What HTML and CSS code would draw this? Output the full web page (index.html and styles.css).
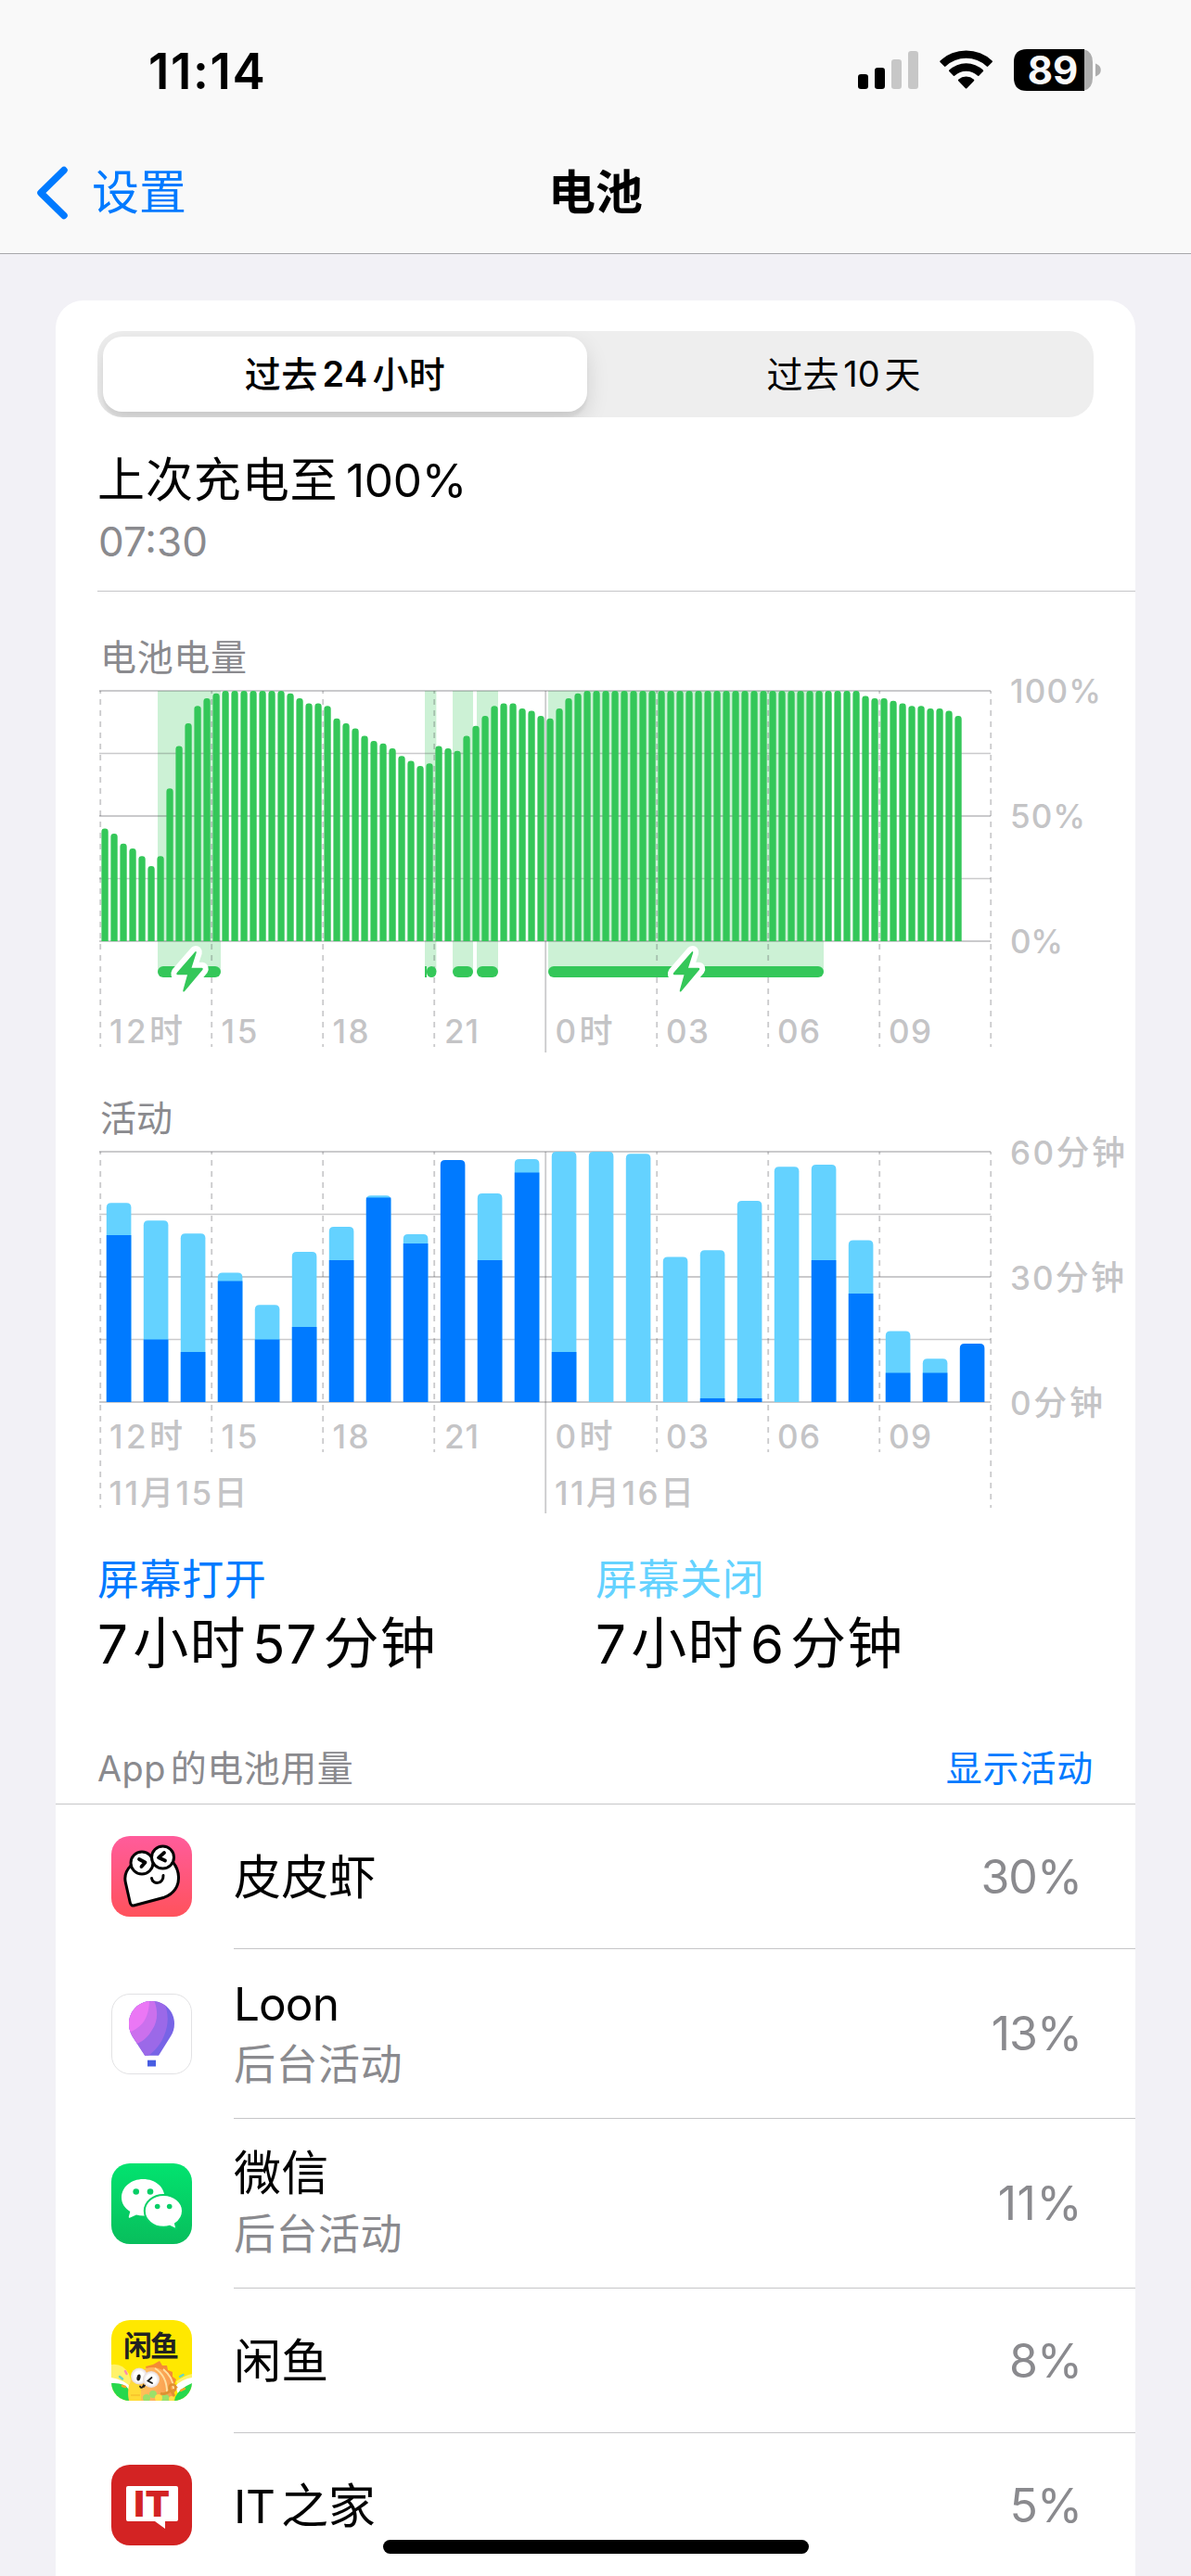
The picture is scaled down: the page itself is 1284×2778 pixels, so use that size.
FILE: index.html
```html
<!DOCTYPE html>
<html lang="zh-CN">
<head>
<meta charset="utf-8">
<title>电池</title>
<link rel="stylesheet" href="styles.css">
</head>
<body>
<header class="header">
  <div class="status">
    <span class="time">11:14</span>
    <svg class="status-icons" viewBox="920 50 270 52" width="270" height="52">
      <rect x="925" y="80" width="11" height="16" rx="3.2"/>
      <rect x="943" y="73" width="11" height="23" rx="3.2"/>
      <rect x="961" y="64" width="11" height="32" rx="3.2" fill="#c7c7c7"/>
      <rect x="979" y="55" width="11" height="41" rx="3.2" fill="#c7c7c7"/>
      <path d="M1013.6 65.5A41 41 0 0 1 1069.600 65.500Q1070.400 66.300 1069.700 67L1065.200 71.600Q1064.500 72.200 1063.700 71.500A32.500 32.500 0 0 0 1019.500 71.500Q1018.700 72.200 1018 71.600L1013.500 67Q1012.800 66.300 1013.600 65.500Z"/>
      <path d="M1023.300 75.600A26.500 26.500 0 0 1 1059.900 75.600Q1060.600 76.400 1059.900 77.100L1055.300 81.700Q1054.600 82.300 1053.800 81.600A18 18 0 0 0 1029.400 81.600Q1028.600 82.300 1027.900 81.700L1023.300 77.100Q1022.600 76.400 1023.300 75.600Z"/>
      <path d="M1033.200 85.700A13 13 0 0 1 1050 85.700Q1050.700 86.500 1050 87.200L1042.300 95.200Q1041.600 95.900 1040.900 95.200L1033.200 87.200Q1032.500 86.500 1033.200 85.700Z"/>
      <path d="M1107 53H1169V98H1107Q1093 98 1093 84V67Q1093 53 1107 53Z"/>
      <path fill="#adadad" d="M1169 53.300Q1178 56 1178 67V84Q1178 95 1169 97.700ZM1181 68.500Q1186.800 70.500 1186.800 75.500T1181 82.500Z"/>
      <text class="battery-level" x="1135" y="90.500" text-anchor="middle">89</text>
    </svg>
  </div>
  <nav class="nav">
    <a class="back">
      <svg viewBox="0 0 34 58" width="34" height="58"><path d="M30 4.500L5 29L30 53.500" fill="none" stroke="#007aff" stroke-width="7.500" stroke-linecap="round" stroke-linejoin="round"/></svg>
      <span>设置</span>
    </a>
    <h1>电池</h1>
  </nav>
</header>

<main class="card">
  <div class="segmented">
    <span class="segment active">过去<span class="n">24</span>小时</span>
    <span class="segment">过去<span class="n">10</span>天</span>
  </div>

  <section class="last-charge">
    <div class="charge-title">上次充电至<span class="n end">100%</span></div>
    <div class="charge-time">07:30</div>
  </section>

  <svg class="chart" id="level-chart" viewBox="60 638 1164 522" width="1164" height="522"></svg>
  <svg class="chart" id="activity-chart" viewBox="60 1160 1164 490" width="1164" height="490"></svg>

  <section class="summary">
    <div>
      <div class="summary-label on">屏幕打开</div>
      <div class="summary-value"><span class="n start">7</span>小时<span class="n">57</span>分钟</div>
    </div>
    <div>
      <div class="summary-label off">屏幕关闭</div>
      <div class="summary-value"><span class="n start">7</span>小时<span class="n">6</span>分钟</div>
    </div>
  </section>

  <div class="list-head">
    <span><span class="n start">App</span>的电池用量</span>
    <a>显示活动</a>
  </div>

  <ul class="apps">
    <li class="app">
      <svg class="icon" viewBox="0 0 87 87">
        <defs><linearGradient id="pink" x2="0" y2="1"><stop stop-color="#ff5c9b"/><stop offset="1" stop-color="#ff525c"/></linearGradient></defs>
        <rect width="87" height="87" rx="20" fill="url(#pink)"/>
        <g fill="#fff" stroke="#000" stroke-width="3" stroke-linecap="round" stroke-linejoin="round">
          <path d="M21 32C15.500 37.500 14 44 15.300 50L20.300 72Q21.200 75.800 25 74.800L57 66.200C67.500 62.500 73 54 72.500 44C72.300 38.500 70.500 33.500 67 29L44 22Z"/>
          <circle cx="33" cy="29" r="12"/><circle cx="55.500" cy="23" r="12"/>
          <path fill="none" d="M43.500 45.500C44.500 53 56.500 52 56 42.500"/>
          <path fill="none" stroke-width="3.800" d="M30 25L36.500 28.500L32.500 33M57 18L51 23.300L58 26.500"/>
        </g>
      </svg>
      <div class="app-body"><div class="app-text"><div class="app-name">皮皮虾</div></div><span class="pct">30%</span></div>
    </li>
    <li class="app tall">
      <svg class="icon" viewBox="0 0 87 87">
        <defs><clipPath id="balloon"><path d="M43.500 8C57.500 8 68 19 68 32.500C68 38 66.500 42 64 46L51 66.700H36.200L22.700 46C20.500 42 19 38 19 32.500C19 19 29.500 8 43.500 8Z"/></clipPath></defs>
        <rect x=".5" y=".5" width="86" height="86" rx="19.500" fill="#fff" stroke="#e2e2e4"/>
        <g clip-path="url(#balloon)">
          <path fill="#7764e6" d="M0 0H87V87H0Z"/>
          <path fill="#9b69e8" d="M0 0H52C62 15 63 31 57 45C53 55 46 64 36 69H0Z"/>
          <path fill="#cb70ed" d="M0 0H43C51 15 51 29 44 39C40 46 35 51 27 54.500H0Z"/>
          <path fill="#eb77f5" d="M0 0H41C42 23 36 35 19 42H0Z"/>
        </g>
        <path fill="#485de2" d="M39 71.700H48V78.500H39Z"/>
      </svg>
      <div class="app-body"><div class="app-text"><div class="app-name latin">Loon</div><div class="app-sub">后台活动</div></div><span class="pct">13%</span></div>
    </li>
    <li class="app tall">
      <svg class="icon" viewBox="0 0 87 87">
        <defs><linearGradient id="green" x2="0" y2="1"><stop stop-color="#02e36f"/><stop offset="1" stop-color="#08be5c"/></linearGradient></defs>
        <rect width="87" height="87" rx="20" fill="url(#green)"/>
        <path fill="#fff" d="M34.300 17C47.500 17 57.500 25.500 57.500 37S47.500 56.500 34.500 56.500Q30.500 56.500 27 55.500L19.800 58.700Q18.500 59 18.800 57.600L20.300 52C14.500 48.500 11 43 11 37C11 25.500 21.500 17 34.300 17Z"/>
        <path fill="#fff" stroke="#06d066" stroke-width="2" d="M56.300 34C45 34 35.800 41.500 35.800 51.300S45 68.800 56.300 68.800Q60 68.800 63 67.800L69 70.600Q70.400 71 70.100 69.600L69 65.200C74 61.800 77 57 77 51.300C77 41.500 67.600 34 56.300 34Z"/>
        <g fill="#06ce66"><circle cx="26.700" cy="30.500" r="3.300"/><circle cx="42" cy="30.500" r="3.300"/><circle cx="49.700" cy="46.500" r="2.800"/><circle cx="62.700" cy="46.500" r="2.800"/></g>
      </svg>
      <div class="app-body"><div class="app-text"><div class="app-name">微信</div><div class="app-sub">后台活动</div></div><span class="pct narrow">11%</span></div>
    </li>
    <li class="app">
      <svg class="icon" viewBox="0 0 87 87">
        <defs>
          <clipPath id="tile"><rect width="87" height="87" rx="20"/></clipPath>
          <linearGradient id="shell" x2="1" y2="0"><stop stop-color="#ffd24a"/><stop offset=".5" stop-color="#ffb45e"/><stop offset="1" stop-color="#f7974a"/></linearGradient>
          <radialGradient id="eye"><stop offset=".6" stop-color="#fff"/><stop offset="1" stop-color="#e3d8d8"/></radialGradient>
        </defs>
        <g clip-path="url(#tile)">
          <rect width="87" height="87" fill="#ffe800"/>
          <path fill="#fff26a" d="M0 48Q12 46 19 58L28 87H0ZM87 58Q78 60 70 66L76 87H87Z"/>
          <path fill="#fff" d="M0 62Q13 64 22 73V82L0 74ZM87 62Q76 64 69 71L72 80L87 72Z"/>
          <path fill="#27d84c" d="M0 68Q14 67 19 75L21 87H0ZM87 68Q73 74 69 83L68 87H87Z"/>
          <path fill="#f58b35" d="M37 50L45 48L52 44L55 49L60 49L61 54L66 56L66 61L70 64L68 69L72 73H44Z"/>
          <path fill="url(#shell)" d="M32 55C46 45 66 55 69 75L66 87H19C17 78 20 70 21 64Z"/>
          <path fill="none" stroke="#ffe0a0" stroke-width="2" d="M47 52Q60 60 60 78M56 53Q67 62 67 74"/>
          <path fill="#ffdb35" d="M19 70Q25 62 32 73V87H20Q17 79 19 70Z"/>
          <path fill="none" stroke="#f4b326" d="M21 81H31"/>
          <circle cx="30" cy="60.500" r="9" fill="url(#eye)"/><circle cx="43" cy="64" r="9" fill="url(#eye)"/>
          <ellipse cx="29.500" cy="62" rx="2" ry="3.500" fill="#1d1d1d" transform="rotate(12 29.500 62)"/>
          <path fill="none" stroke="#1d1d1d" stroke-width="1.800" stroke-linecap="round" d="M43.500 62L39.500 65.500L44 68M31 71.500Q32.500 74.500 34.500 71Q35 73 36 70.500"/>
          <g fill="#9be06a"><circle cx="45" cy="80" r="4"/><circle cx="38" cy="84" r="4"/><circle cx="58" cy="85" r="5"/></g>
          <g fill="#ffe14a"><circle cx="51" cy="84" r="4"/><circle cx="65" cy="85" r="3"/></g>
          <g fill="none" stroke="#df9131" stroke-width="2.600"><circle cx="66" cy="73" r="3.500"/><path d="M53 79Q58 81 64 76M65 77L68 82"/></g>
          <g stroke-width="2.500" stroke-linecap="round"><path stroke="#f78fae" d="M15 55L16.500 58"/><path stroke="#69d4c4" d="M9 61L12 63.500M74 61L77.500 59"/><path stroke="#f6a623" d="M12 71L15 72M75 76L79 74"/></g>
          <text class="xianyu-mark" x="13" y="39" textLength="60">闲鱼</text>
        </g>
      </svg>
      <div class="app-body"><div class="app-text"><div class="app-name">闲鱼</div></div><span class="pct">8%</span></div>
    </li>
    <li class="app">
      <svg class="icon" viewBox="0 0 87 87">
        <rect width="87" height="87" rx="20" fill="#d32323"/>
        <path fill="#fff" d="M18 23H70Q72 23 72 25V59Q72 61 70 61H58V69L47 61H18Q16 61 16 59V25Q16 23 18 23Z"/>
        <text class="it-mark" x="24.500" y="56" textLength="38.500" lengthAdjust="spacing">IT</text>
      </svg>
      <div class="app-body"><div class="app-text"><div class="app-name it"><span class="n start">IT</span>之家</div></div><span class="pct">5%</span></div>
    </li>
  </ul>
</main>
<div class="home-indicator"></div>
<script src="charts.js"></script>
</body>
</html>
```
FILE: styles.css
```css
* { box-sizing: border-box; }

html, body { height: 100%; }

body {
  margin: 0;
  overflow: hidden;
  display: flex;
  flex-direction: column;
  width: 1284px;
  height: 2778px;
  background: #f2f1f6;
  color: #000;
  font-family: Inter, "Noto Sans CJK SC", sans-serif;
  font-size: 51px;
  text-autospace: no-autospace;
  position: relative;
}

/* Latin runs set between Chinese characters */
.n { font-size: .97em; line-height: 1; margin: 0 .13em; }
.n.start { margin-left: 0; }
.n.end { margin-right: 0; }

.header {
  flex: none;
  height: 274px;
  background: #f9f9f9;
  border-bottom: 1px solid #a8a8ab;
}

.status {
  display: flex;
  justify-content: space-between;
  align-items: center;
  height: 152px;
  padding: 0 94px 0 160px;
}
.time { font-size: 53px; font-weight: 600; line-height: 60px; letter-spacing: 1.6px; padding-top: 2px; }
.status-icons { display: block; }
.battery-level { font: 700 42px Inter, sans-serif; fill: #f9f9f9; }

.nav {
  display: grid;
  grid-template-columns: 1fr auto 1fr;
  align-items: center;
  height: 121px;
  padding: 0 39px 10px;
}
.back {
  display: flex;
  align-items: center;
  gap: 26px;
  color: #007aff;
  line-height: 60px;
}
.nav h1 { margin: 0; font-size: 51px; line-height: 60px; font-weight: 600; }

.card {
  flex: none;
  width: 1164px;
  margin: 50px 60px 0;
  padding-top: 33px;
  background: #fff;
  border-radius: 30px 30px 0 0;
}

.segmented {
  display: flex;
  height: 93px;
  margin: 0 45px;
  padding: 6px;
  border-radius: 27px;
  background: #eee;
  overflow: hidden;
}
.segment {
  flex: 1;
  display: flex;
  justify-content: center;
  align-items: center;
  padding-left: 13px;
  font-size: 39px;
  line-height: 48px;
}
.segment.active {
  flex: none;
  width: 522px;
  padding-left: 0;
  border-radius: 21px;
  background: #fff;
  font-weight: 500;
  letter-spacing: .4px;
  box-shadow: 0 9px 24px rgba(0, 0, 0, .12), 0 6px 3px rgba(0, 0, 0, .05);
}
.segment.active .n { font-weight: 600; }

.last-charge {
  margin: 38px 0 0 45px;
  padding-bottom: 27px;
  border-bottom: 1px solid #c6c6c8;
}
.charge-title { line-height: 60px; letter-spacing: .9px; }
.charge-title .n { letter-spacing: -.2px; margin-left: .17em; }
.charge-time { margin-top: 10px; padding-left: 1px; font-size: 44px; line-height: 52px; color: #8a8a8e; }

.chart { display: block; }
.chart text { font-size: 36px; font-weight: 500; fill: #c4c4c6; }
.chart text.chart-title { font-size: 39px; font-weight: 400; fill: #8a8a8e; }
.chart .num { font-size: 35px; }
.grid { stroke: #3c3c43; stroke-opacity: .27; fill: none; }
.grid-dashed { stroke-dasharray: 6 6; stroke-dashoffset: 3; }
.charge-band { fill: #34c759; fill-opacity: .25; }
.charge-pill, .level, .bolt { fill: #34c759; }
.bolt { stroke: #fff; stroke-width: 12; paint-order: stroke; stroke-linejoin: round; }
.screen-off { fill: #64d2ff; }
.screen-on { fill: #007aff; }

.summary {
  display: grid;
  grid-template-columns: 537px 1fr;
  padding: 27px 0 0 45px;
}
.summary-label { font-size: 45px; line-height: 54px; letter-spacing: .6px; }
.summary-label.on { color: #007aff; }
.summary-label.off { color: #64d2ff; }
.summary-value { margin-top: 5px; font-size: 60px; line-height: 72px; letter-spacing: 1.2px; }
.summary-value .n { margin-left: .11em; margin-right: .1em; }
.summary-value .n.start { margin-left: 0; margin-right: .07em; }

.list-head {
  display: flex;
  justify-content: space-between;
  margin-top: 75px;
  padding: 0 45px 14px 45px;
  border-bottom: 1px solid #c6c6c8;
  font-size: 39px;
  line-height: 48px;
  letter-spacing: .5px;
  color: #8a8a8e;
}
.list-head a { color: #007aff; letter-spacing: .8px; }

.apps { margin: 0; padding: 0; list-style: none; }
.app {
  display: flex;
  align-items: center;
  height: 156px;
  padding-left: 60px;
}
.app.tall { height: 183px; }
.icon { flex: none; width: 87px; height: 87px; margin: 0 45px 1px 0; }
.app-body {
  flex: 1;
  align-self: stretch;
  display: flex;
  justify-content: space-between;
  align-items: center;
  padding-right: 58px;
  border-bottom: 1px solid #c6c6c8;
}
.app:last-child .app-body { border-bottom: 0; }
.app-text { padding-top: 2px; }
.app-name { line-height: 60px; letter-spacing: .3px; }
.app-name.latin { font-size: 49.5px; letter-spacing: -.9px; }
.app-name.it { letter-spacing: -.3px; }
.app.tall .app-text { padding: 0 0 2px; }
.app-sub { margin-top: 9px; font-size: 45px; line-height: 54px; letter-spacing: .5px; color: #8a8a8e; }
.pct { font-size: 50px; line-height: 60px; letter-spacing: -1px; color: #8a8a8e; }
.pct.narrow { letter-spacing: .5px; margin-right: -1px; }
.xianyu-mark { font: 700 31px "Noto Sans CJK SC", sans-serif; fill: #222; }
.it-mark { font: 900 38.5px Inter, sans-serif; fill: #d32323; }

.home-indicator {
  position: absolute;
  left: 413px;
  top: 2739px;
  width: 459px;
  height: 15px;
  border-radius: 8px;
  background: #000;
}
```
FILE: charts.js
```js
const LEFT = 108, RIGHT = 1068, MIDNIGHT = 588;

// Battery level in percent, one value per 15 minutes
const full = n => Array(n).fill(100);
const levels = [45, 43, 39, 37, 34, 30, 34, 61, 78, 87, 94, 97, 99, ...full(7), 99, 97, 95, 95, 94, 89, 87,
  85, 82, 80, 79, 77, 74, 72, 70, 71, 78, 77, 76, 82, 86, 90, 94, 95, 95, 93, 92, 90, 89, 93, 97, 99,
  ...full(30), 98, 97, 97, 96, 95, 94, 94, 93, 93, 92, 90];

// Minutes per hour: [total, screen on]
const activity = [[47.7, 40], [43.5, 15], [40.4, 12], [31, 29], [23.3, 15], [36, 18], [42, 34], [49.5, 49],
  [40.2, 38], [58, 58], [50, 34], [58.2, 55], [60, 12], [60, 0], [59.5, 0], [34.8, 0], [36.4, .9],
  [48.2, .9], [56.4, 0], [56.9, 34], [38.8, 26], [17, 7], [10.4, 7], [14, 14]];

const charging = [[170, 238], [460, 470.4], [488, 510], [514, 537], [591, 888]];

const label = (x, y, s, length) =>
  `<text x="${x}" y="${y}"${length ? ` textLength="${length}"` : ''}>${s.replace(/[\d%]+/g, '<tspan class="num">$&</tspan>')}</text>`;

function grid(top, dashEnd, solidEnd, outerEnd) {
  let out = '';
  for (let i = 0; i <= 4; i++) {
    out += `<path class="grid" stroke-width="${i % 2 ? 1.5 : 2}" d="M${LEFT - 1} ${top + i * 67.5}H${RIGHT}"/>`;
  }
  for (let x = LEFT; x <= RIGHT; x += 120) {
    const end = x === MIDNIGHT ? solidEnd : x === LEFT || x === RIGHT ? outerEnd : dashEnd;
    out += `<path class="grid${x === MIDNIGHT ? '' : ' grid-dashed'}" stroke-width="1.800" d="M${x + .2} ${top}V${end}"/>`;
  }
  return out;
}

function hours(y) {
  return [[118, '12时', 79], [238.5, '15', 39], [358.500, '18', 39], [479, '21', 37], [598.5, '0时', 62],
    [718, '03', 46], [838, '06', 46], [958, '09', 46]].map(h => label(h[0], y, h[1], h[2])).join('');
}

const barPath = (x, w, r, y, bottom) =>
  `M${x} ${bottom}V${y + r}Q${x} ${y} ${x + r} ${y}H${x + w - r}Q${x + w} ${y} ${x + w} ${y + r}V${bottom}Z`;

function levelChart() {
  const top = 745, bottom = 1015;
  let out = '<text class="chart-title" x="108" y="723" textLength="158">电池电量</text>';
  out += `<path class="charge-band" d="M458 ${top}H460V1042H458Z"/>`;
  charging.forEach(([a, b]) => { out += `<path class="charge-band" d="M${a} ${top}H${b}V1048H${a}Z"/>`; });
  out += grid(top, 1129, 1135, 1129);
  out += `<path class="level" d="${levels.map((v, i) => barPath(109.4 + i * 10, 7.3, 3.4, bottom - v * 2.7, bottom)).join('')}"/>`;
  out += '<path class="charge-pill" d="M458 1042H460V1054H458Z"/>';
  charging.forEach(([a, b]) => { out += `<rect class="charge-pill" x="${a}" y="1042" width="${b - a}" height="12" rx="${Math.min(6, (b - a) / 2)}"/>`; });
  [0, 535.5].forEach(dx => {
    out += `<path class="bolt" transform="translate(${dx})" d="M210.500 1026.200Q212 1025.500 211.700 1027.500L206.500 1043.700H217.500Q219.500 1044 218.300 1046L199 1069Q197 1070.500 197.300 1068L202 1051.300H191.500Q189.500 1051 190.700 1049Z"/>`;
  });
  out += hours(1125) + label(1089, 758, '100%', 98) + label(1089, 893, '50%', 81) + label(1089, 1028, '0%', 57);
  return out;
}

function activityChart() {
  const top = 1242, bottom = 1512;
  let out = '<text class="chart-title" x="108" y="1220" textLength="78">活动</text>';
  out += grid(top, 1566, 1632, 1626);
  activity.forEach(([total, on], i) => {
    const x = 114.8 + i * 40, w = 26.6;
    out += `<path class="${total === on ? 'screen-on' : 'screen-off'}" d="${barPath(x, w, 5, bottom - total * 4.5, bottom)}"/>`;
    if (on && on < total) out += `<rect class="screen-on" x="${x}" y="${bottom - on * 4.5}" width="${w}" height="${on * 4.5}"/>`;
  });
  out += hours(1562) + label(117.5, 1623, '11月15日', 149) + label(598, 1623, '11月16日', 150);
  out += label(1089, 1256, '60分钟', 124) + label(1089, 1391, '30分钟', 123) + label(1089, 1526, '0分钟', 100);
  return out;
}

document.getElementById('level-chart').innerHTML = levelChart();
document.getElementById('activity-chart').innerHTML = activityChart();
```
